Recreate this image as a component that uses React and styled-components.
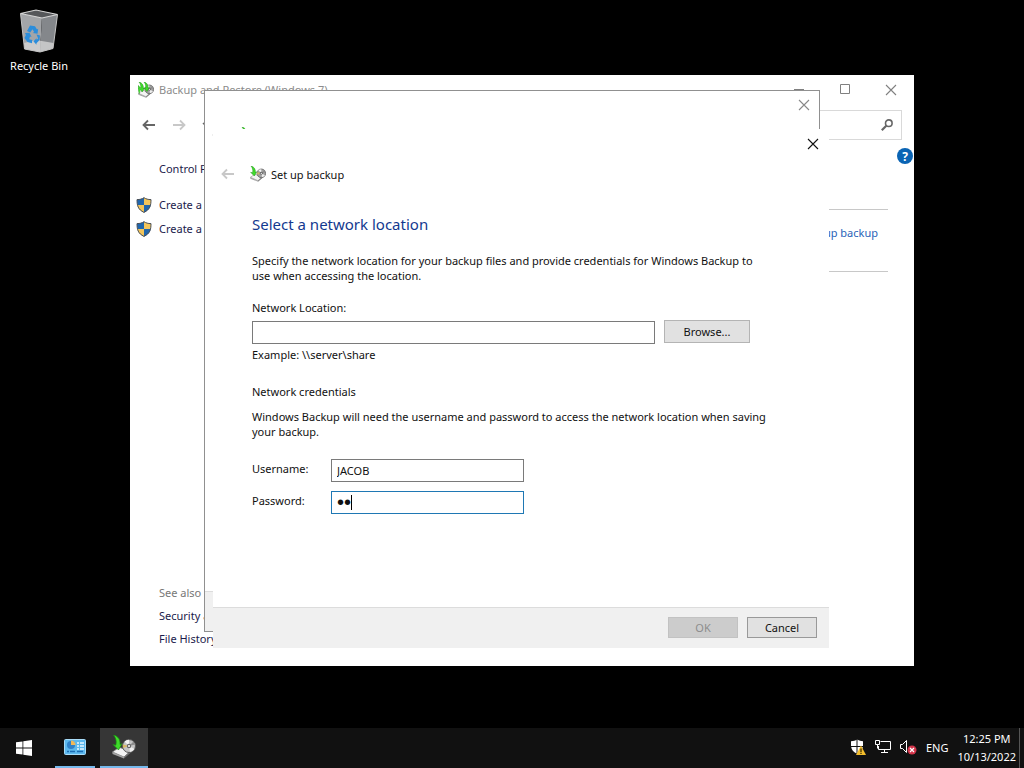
import React, {useState} from 'react';
import styled, {createGlobalStyle} from 'styled-components';

const GlobalStyle = createGlobalStyle`
    * {
        box-sizing: border-box;
    }

    body {
        margin: 0;
        background: #000;
        font-family: "Noto Sans", "Open Sans", sans-serif;
        font-size: 11px;
        line-height: 15px;
        color: #111;
    }

    button, input {
        font: inherit;
        color: inherit;
    }

    h1, h2, p {
        margin: 0;
        font-size: 11px;
        font-weight: 400;
    }
`;

const BackupIcon = ({size, twin}) => (
    <svg width={size} height={size} viewBox="0 0 24 24" aria-hidden="true">
        <path d="M.5 17 7 12.500l12 3L12 22z" fill="#f4f4f4" stroke="#888" strokeWidth=".8"/>
        <path d="M.5 17v2L12 23.500V22z" fill="#a5a5a5"/>
        <path d="M12 22l7-6.500v2l-7 6z" fill="#707070"/>
        <circle cx="17" cy="11" r="6.500" fill={size > 16 ? '#c4c4c4' : '#a0a0a0'} stroke="#555" strokeWidth="1"/>
        <path d="M17 11 12.500 6.500A6.500 6.500 0 0 1 17 4.800z" fill="#f4f4f4"/>
        <path d="M17 11l5.500 3a6.500 6.500 0 0 1-4.500 3z" fill="#eee"/>
        <path d="M17 11l-6 2-.2-3.500z" fill="#d8b765"/>
        <path d="M17 11l6-1.500-1.500-3z" fill="#8b8b8b"/>
        <circle cx="17" cy="11" r="2.200" fill="#666"/>
        <circle cx="17" cy="11" r="1" fill="#fff"/>
        <path d="M1.500 0C6 1 8.500 4.500 8 9.500l2-.8L6.500 15 1 9.500l2.800.7C5 6 3.500 2.500 1.500 0z" fill="#3fdc2b" stroke="#188c10" strokeWidth=".7"/>
        {twin &&
            <path d="M2 18C0 12 1 8 0 5l4 4M9 0c4.500 1 6.500 4.500 6 9l2-.8-3.500 6L8.500 9l2.800.7C12.500 6 11 2.500 9 0z" fill="#3fdc2b" stroke="#188c10" strokeWidth=".7"/>
        }
    </svg>
);

const ShieldIcon = () => (
    <svg width="16" height="16" viewBox="0 0 16 16" aria-hidden="true">
        <path d="M8 .5C6 2 4 2.500 1 2.500c0 6 1 10 7 13z" fill="#2066ad"/>
        <path d="M8 .5c2 1.500 4 2 7 2 0 6-1 10-7 13z" fill="#f3c55b"/>
        <path d="M1.200 8H8v7.500C4 13.500 2 11.500 1.200 8z" fill="#f3c55b"/>
        <path d="M14.800 8H8v7.500c4-2 6-4 6.800-7.500z" fill="#2066ad"/>
        <path d="M8 .7C6 2 4 2.600 1 2.600c0 6 1 9.900 7 12.800 6-2.900 7-6.800 7-12.800-3 0-5-.6-7-1.900z" fill="none" stroke="#4a5058" strokeWidth="1"/>
    </svg>
);

const RecycleIcon = () => (
    <svg width="40" height="44" viewBox="0 0 40 44" aria-hidden="true">
        <path d="M1.500 4.500 23 8l-2 35L5.500 40z" fill="#a3a5a8"/>
        <path d="M23 8 38.500 5.500 34 39.500 21 43z" fill="#84878b"/>
        <path d="M5 34l12-3 17.500 3-.5 5.500L21 43 5.500 40z" fill="#dadada" opacity=".75"/>
        <path d="M1.500 4.500 17 1l21.500 4.500L23 9z" fill="#55575a" stroke="#d6d6d6" strokeWidth="1.200"/>
        <path d="M1.500 4.500 5.500 40 21 43l13-3.500L38.500 5.500" fill="none" stroke="#c4c4c4" strokeWidth="1"/>
        <g fill="#2b8ddb">
            <path d="M8 22l3-5.500 5 .8 2 3.200 1.200-.8-.7 5-4.700-.8 1.300-1-1.600-2.600-2.300 3.200z"/>
            <path d="M6 24l4.500-.3 2 4.300-1.500-.5-.8 2.800 3 .7-.2 3.300-4.500-1.200L5.500 29l1.400-3z"/>
            <path d="M17.500 25.500l3.500 1-.5 4.500-3 3.200-.1 1.600-3-3.600 3.200-3 .1 1.600 1.500-1.200z"/>
        </g>
    </svg>
);

const ArrowIcon = ({flip}) => (
    <svg width="14" height="12" viewBox="0 0 14 12" aria-hidden="true">
        <path d={flip ? "M1 6h11M8 1.500 12.500 6 8 10.500" : "M13 6H2M6 1.500 1.500 6 6 10.500"} fill="none" stroke="currentColor" strokeWidth="1.800"/>
    </svg>
);

const ChevronIcon = () => (
    <svg width="8" height="6" viewBox="0 0 8 6" aria-hidden="true">
        <path d="M1 1l3 3 3-3" fill="none" stroke="currentColor" strokeWidth="1.500"/>
    </svg>
);

const CrossIcon = () => (
    <svg width="12" height="12" viewBox="0 0 12 12" aria-hidden="true">
        <path d="M1 1l10 10M11 1 1 11" fill="none" stroke="currentColor" strokeWidth="1.100"/>
    </svg>
);

const MinimizeIcon = () => (
    <svg width="12" height="12" viewBox="0 0 12 12" aria-hidden="true">
        <path d="M1 5.500h10" stroke="currentColor"/>
    </svg>
);

const MaximizeIcon = () => (
    <svg width="12" height="12" viewBox="0 0 12 12" aria-hidden="true">
        <path d="M1.500.500h9v9h-9z" fill="none" stroke="currentColor"/>
    </svg>
);

const SearchIcon = () => (
    <svg width="12" height="12" viewBox="0 0 12 12" aria-hidden="true">
        <circle cx="7.800" cy="4.200" r="3.300" fill="none" stroke="#666" strokeWidth="1.600"/>
        <path d="M5.300 6.700.8 11.200" stroke="#666" strokeWidth="2.200"/>
    </svg>
);

const StartIcon = () => (
    <svg width="16" height="16" viewBox="0 0 16 16" aria-hidden="true">
        <path d="M0 2.300 6.500 1.400v6.200H0zM7.300 1.300 16 0v7.600H7.300zM0 8.400h6.500v6.200L0 13.700zM7.300 8.400H16V16l-8.700-1.300z" fill="#fff"/>
    </svg>
);

const ControlPanelIcon = () => (
    <svg width="22" height="16" viewBox="0 0 22 16" aria-hidden="true">
        <rect x=".5" y=".5" width="21" height="15" rx="1" fill="#5cb8ee" stroke="#a9dcf8"/>
        <circle cx="7" cy="6" r="4" fill="#2f80c8"/>
        <path d="M7 6V1.500A4.500 4.500 0 0 1 11.500 6z" fill="#f0b85a"/>
        <path d="M13 4h2M16 4h4M13 7h2M16 7h4M13 10h2M16 10h4" stroke="#e8f7ff" strokeWidth="1.400"/>
        <path d="M3 12.500h2M6 12.500h5M13 12.500h6" stroke="#1d6db4" strokeWidth="1.400"/>
    </svg>
);

const DefenderIcon = () => (
    <svg width="16" height="16" viewBox="0 0 16 16" aria-hidden="true">
        <path d="M7 .5C5.500 1.700 3.500 2.200 1 2.200V7h5.500V1zM7.500 1v6H13V2.200C11 2.200 9 1.700 7.500.5zM1.200 8c.3 3 2.300 5 5.300 6.500V8zM7.500 8v6.500C10.500 13 12.500 11 12.800 8z" fill="#fff"/>
        <path d="M11 6.500 16 16H6z" fill="#f3bd2c"/>
        <path d="M11 9.500v3.500M11 13.800v1.200" stroke="#332600" strokeWidth="1.200"/>
    </svg>
);

const NetworkIcon = () => (
    <svg width="16" height="14" viewBox="0 0 16 14" aria-hidden="true">
        <path d="M5.500 1.500h10v8h-12V6M9.500 9.500v3M6 12.500h7" fill="none" stroke="#fff"/>
        <path d="M.5.500h4v4h-4zM2.500 4.500v4" fill="#111" stroke="#fff"/>
    </svg>
);

const VolumeIcon = () => (
    <svg width="17" height="16" viewBox="0 0 17 16" aria-hidden="true">
        <path d="M.5 5.500h2L6.500 1.500v12L2.500 9.500h-2z" fill="none" stroke="#fff"/>
        <circle cx="12" cy="11" r="4.500" fill="#d4344a"/>
        <path d="M10 9l4 4M14 9l-4 4" stroke="#fff" strokeWidth="1.200"/>
    </svg>
);

function Dialog({children, footer, ...place}) {
    return (
        <DialogFrame {...place}>
            <DialogTop>
                <CloseButton aria-label="Close"><CrossIcon/></CloseButton>
            </DialogTop>
            <DialogHeader>
                <NavButton $faded disabled aria-label="Back"><ArrowIcon/></NavButton>
                <BackupIcon size={16}/>
                <h2>Set up backup</h2>
            </DialogHeader>
            <DialogBody>{children}</DialogBody>
            <DialogFooter>{footer}</DialogFooter>
        </DialogFrame>
    );
}

function BackupWindow() {
    return (
        <Window>
            <TitleBar>
                <BackupIcon size={16} twin/>
                <WindowTitle>Backup and Restore (Windows 7)</WindowTitle>
                <WindowButton aria-label="Minimize"><MinimizeIcon/></WindowButton>
                <WindowButton aria-label="Maximize"><MaximizeIcon/></WindowButton>
                <WindowButton aria-label="Close"><CrossIcon/></WindowButton>
            </TitleBar>
            <ToolBar>
                <NavButton aria-label="Back"><ArrowIcon/></NavButton>
                <NavButton $faded aria-label="Forward"><ArrowIcon flip/></NavButton>
                <NavButton aria-label="Recent locations"><ChevronIcon/></NavButton>
                <SearchBox>
                    <input type="text" aria-label="Search"/>
                    <SearchIcon/>
                </SearchBox>
            </ToolBar>
            <WindowBody>
                <SideBar>
                    <SideLink href="#home">Control Panel Home</SideLink>
                    <TaskList>
                        <SideLink href="#image"><ShieldIcon/>Create a system image</SideLink>
                        <SideLink href="#disc"><ShieldIcon/>Create a system repair disc</SideLink>
                    </TaskList>
                    <SeeAlso>
                        <span>See also</span>
                        <SideLink href="#security">Security and Maintenance</SideLink>
                        <SideLink href="#history">File History</SideLink>
                    </SeeAlso>
                </SideBar>
                <Main>
                    <HelpButton aria-label="Help">?</HelpButton>
                    <BackupPanel>
                        <a href="#setup">Set up backup</a>
                    </BackupPanel>
                </Main>
            </WindowBody>
        </Window>
    );
}

function NetworkForm() {
    const [location, setLocation] = useState('');
    const [username, setUsername] = useState('JACOB');
    const [password, setPassword] = useState('12');

    return (
        <>
            <Heading>Select a network location</Heading>
            <Text>
                Specify the network location for your backup files and provide credentials for Windows Backup to use when accessing the location.
            </Text>
            <label htmlFor="location">Network Location:</label>
            <LocationRow>
                <TextBox id="location" value={location} onChange={(e) => setLocation(e.target.value)}/>
                <Button $wide>Browse...</Button>
            </LocationRow>
            <p>Example: \\server\share</p>
            <Subheading>Network credentials</Subheading>
            <Text>
                Windows Backup will need the username and password to access the network location when saving your backup.
            </Text>
            <Credentials>
                <label htmlFor="username">Username:</label>
                <TextBox id="username" value={username} onChange={(e) => setUsername(e.target.value)}/>
                <label htmlFor="password">Password:</label>
                <PasswordField>
                    <TextBox $active id="password" type="password" value={password} onChange={(e) => setPassword(e.target.value)}/>
                    <Caret/>
                </PasswordField>
            </Credentials>
        </>
    );
}

function App() {
    return (
        <Screen>
            <GlobalStyle/>
            <Desktop>
                <DesktopIcon href="#bin">
                    <RecycleIcon/>
                    Recycle Bin
                </DesktopIcon>
                <BackupWindow/>
                <Dialog $top={90} $left={204} $right={204} $bottom={96} $inactive/>
                <Dialog
                    $top={129}
                    $left={213}
                    $right={195}
                    $bottom={80}
                    footer={
                        <>
                            <Button disabled>OK</Button>
                            <Button $outlined>Cancel</Button>
                        </>
                    }
                >
                    <NetworkForm/>
                </Dialog>
            </Desktop>
            <TaskBar>
                <StartButton aria-label="Start"><StartIcon/></StartButton>
                <TaskButton aria-label="Control Panel"><ControlPanelIcon/></TaskButton>
                <TaskButton $active aria-label="Backup and Restore"><BackupIcon size={24}/></TaskButton>
                <Tray>
                    <DefenderIcon/>
                    <NetworkIcon/>
                    <VolumeIcon/>
                    <span>ENG</span>
                    <Clock>
                        <span>12:25 PM</span>
                        <span>10/13/2022</span>
                    </Clock>
                </Tray>
            </TaskBar>
        </Screen>
    );
}

export default App;

const Screen = styled.div`
    display: flex;
    flex-direction: column;
    min-height: 100vh;
`;

const Desktop = styled.main`
    position: relative;
    flex: 1;
    overflow: hidden;
`;

const DesktopIcon = styled.a`
    display: flex;
    flex-direction: column;
    align-items: center;
    gap: 5px;
    width: 78px;
    padding-top: 9px;
    color: #fff;
    text-decoration: none;
`;

const Window = styled.section`
    position: absolute;
    top: 75px;
    right: 110px;
    bottom: 62px;
    left: 130px;
    display: flex;
    flex-direction: column;
    background: #fff;
    white-space: nowrap;
`;

const TitleBar = styled.header`
    display: flex;
    align-items: center;
    height: 29px;
    padding-left: 8px;
    color: #8c8c8c;
`;

const WindowTitle = styled.h1`
    flex: 1;
    padding-left: 5px;
`;

const IconButton = styled.button`
    display: flex;
    align-items: center;
    justify-content: center;
    padding: 0;
    border: 0;
    background: none;
`;

const WindowButton = styled(IconButton)`
    width: 46px;
    height: 29px;
    color: #808080;
`;

const NavButton = styled(IconButton)`
    color: ${props => props.$faded ? '#c8c8c8' : '#666'};
`;

const ToolBar = styled.div`
    display: flex;
    align-items: center;
    gap: 16px;
    padding: 6px 12px 0;
`;

const SearchBox = styled.div`
    display: flex;
    align-items: center;
    width: 200px;
    height: 30px;
    margin-left: auto;
    padding-right: 8px;
    border: 1px solid #d9d9d9;

    input {
        flex: 1;
        min-width: 0;
        border: 0;
        outline: 0;
    }
`;

const WindowBody = styled.div`
    display: flex;
    flex: 1;
`;

const SideBar = styled.nav`
    display: flex;
    flex-direction: column;
    width: 200px;
    padding: 21px 0 20px 29px;
`;

const SideLink = styled.a`
    display: flex;
    align-items: center;
    color: #1b1b4b;
    text-decoration: none;
`;

const TaskList = styled.div`
    display: flex;
    flex-direction: column;
    gap: 9px;
    margin: 21px 0 0 -23px;

    svg {
        margin: -1px 7px -1px 0;
    }
`;

const SeeAlso = styled.div`
    display: flex;
    flex-direction: column;
    gap: 8px;
    margin-top: auto;
    color: #777;
`;

const Main = styled.div`
    display: flex;
    flex: 1;
    flex-direction: column;
    padding-top: 8px;
`;

const HelpButton = styled(IconButton)`
    align-self: flex-end;
    width: 16px;
    height: 16px;
    margin-right: 1px;
    border-radius: 50%;
    background: #0a64b4;
    color: #fff;
    font-size: 12px;
    font-weight: 700;
`;

const BackupPanel = styled.div`
    display: flex;
    justify-content: flex-end;
    margin: 45px 26px 0 30px;
    padding: 15px 10px 31px;
    border: solid #c8c8c8;
    border-width: 1px 0;

    a {
        color: #2a63b8;
        text-decoration: none;
    }
`;

const DialogFrame = styled.section`
    position: absolute;
    top: ${props => props.$top}px;
    right: ${props => props.$right}px;
    bottom: ${props => props.$bottom}px;
    left: ${props => props.$left}px;
    display: flex;
    flex-direction: column;
    background: #fff;
    color: ${props => props.$inactive ? '#888' : '#111'};
    outline: ${props => props.$inactive ? '1px solid #909090' : 'none'};
    outline-offset: -1px;
`;

const DialogTop = styled.div`
    display: flex;
    justify-content: flex-end;
    height: 30px;
`;

const CloseButton = styled(IconButton)`
    width: 32px;
    height: 30px;
`;

const DialogHeader = styled.header`
    display: flex;
    align-items: center;
    height: 30px;
    padding-left: 8px;

    svg + h2 {
        padding-left: 5px;
    }

    button + svg {
        margin-left: 15px;
    }
`;

const DialogBody = styled.div`
    flex: 1;
    padding: 24px 56px 0 39px;
`;

const DialogFooter = styled.footer`
    display: flex;
    justify-content: flex-end;
    gap: 9px;
    height: 41px;
    padding: 9px 12px 0;
    border-top: 1px solid #dcdcdc;
    background: #f0f0f0;
`;

const Heading = styled.h1`
    margin-bottom: 18px;
    font-size: 15px;
    line-height: 22px;
    color: #13398f;
`;

const Text = styled.p`
    margin: 17px 0;
`;

const Subheading = styled.h2`
    margin: 22px 0 -7px;
`;

const LocationRow = styled.div`
    display: flex;
    align-items: flex-end;
    gap: 9px;
    height: 24px;
    margin: 5px 23px 3px 0;

    button {
        align-self: flex-start;
    }
`;

const TextBox = styled.input`
    flex: 1;
    min-width: 0;
    height: 23px;
    padding: 0 5px;
    border: 1px solid ${props => props.$active ? '#1f78b4' : '#7a7a7a'};
    border-radius: 0;
    outline: 0;
    background: #fff;

    &[type="password"] {
        font-family: "Liberation Sans", sans-serif;
        font-size: 20px;
    }
`;

const Button = styled.button`
    width: ${props => props.$wide ? 86 : 70}px;
    height: ${props => props.$wide ? 23 : 21}px;
    padding: 0;
    border: 1px solid ${props => props.$outlined ? '#999' : '#b4b4b4'};
    background: #e1e1e1;

    &:disabled {
        border-color: #c2c2c2;
        background: #cccccc;
        color: #8c8c8c;
    }
`;

const Credentials = styled.div`
    display: grid;
    grid-template-columns: 79px 193px;
    row-gap: 9px;
    margin-top: 20px;

    label {
        padding-top: 2px;
    }
`;

const PasswordField = styled.div`
    position: relative;
    display: flex;
`;

const Caret = styled.span`
    position: absolute;
    top: 4px;
    left: 20px;
    width: 1px;
    height: 15px;
    background: #000;
`;

const TaskBar = styled.footer`
    display: flex;
    height: 40px;
    background: #111;
    color: #fff;
`;

const StartButton = styled(IconButton)`
    width: 48px;
    margin-right: 7px;
`;

const TaskButton = styled(IconButton)`
    width: ${props => props.$active ? 48 : 40}px;
    margin-right: 5px;
    border-bottom: 2px solid #76b9ed;
    background: ${props => props.$active ? '#363636' : 'none'};
`;

const Tray = styled.div`
    display: flex;
    align-items: center;
    gap: 9px;
    margin-left: auto;
    margin-right: 4px;
    padding: 0 3px 2px 0;
    border-right: 1px solid #555;
`;

const Clock = styled.div`
    display: flex;
    flex-direction: column;
    align-items: center;
    gap: 3px;
`;
